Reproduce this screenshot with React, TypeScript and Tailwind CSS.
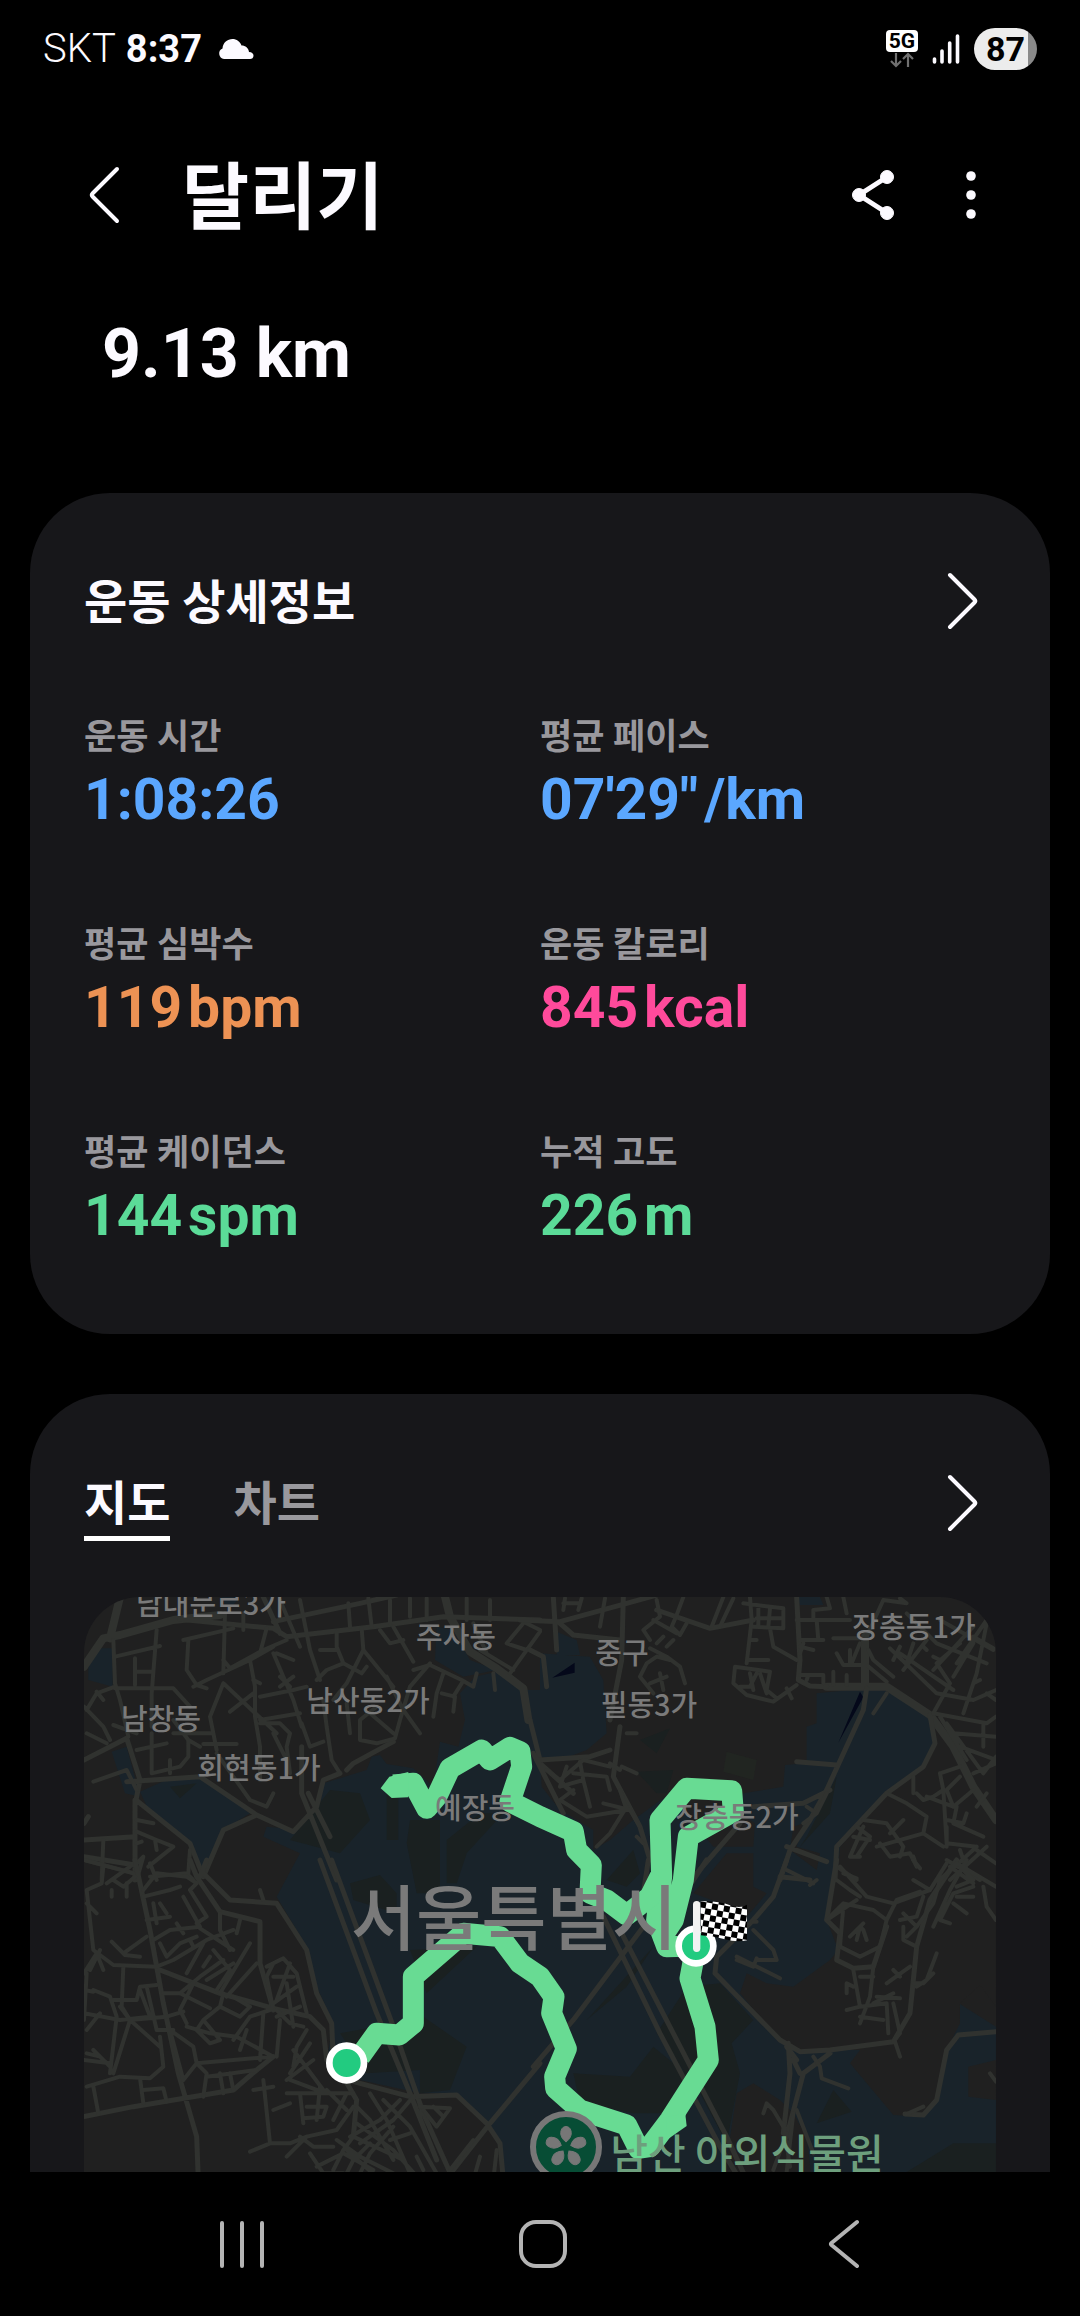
import { useState } from 'react';

const metrics = [
    { label: '운동 시간', value: '1:08:26', unit: '', color: 'text-[#5ba7ff]' },
    { label: '평균 페이스', value: `07'29"`, unit: '/km', color: 'text-[#5ba7ff]' },
    { label: '평균 심박수', value: '119', unit: 'bpm', color: 'text-[#ed9254]' },
    { label: '운동 칼로리', value: '845', unit: 'kcal', color: 'text-[#ff4a9b]' },
    { label: '평균 케이던스', value: '144', unit: 'spm', color: 'text-[#5bdb98]' },
    { label: '누적 고도', value: '226', unit: 'm', color: 'text-[#5bdb98]' },
];

const places = [
    { name: '남대문로3가', x: 127, y: 18 },
    { name: '주자동', x: 372, y: 51 },
    { name: '남산동2가', x: 284, y: 115 },
    { name: '남창동', x: 77, y: 133 },
    { name: '회현동1가', x: 175, y: 182 },
    { name: '예장동', x: 391, y: 222 },
    { name: '장충동1가', x: 830, y: 41 },
    { name: '중구', x: 538, y: 67 },
    { name: '필동3가', x: 565, y: 119 },
    { name: '장충동2가', x: 653, y: 231 },
];

function Chevron({ left = false }: { left?: boolean }) {
    return (
        <svg viewBox="0 0 32 60" className="h-15 w-8" fill="none" stroke="currentColor" strokeWidth="4" strokeLinecap="round" strokeLinejoin="round">
            {left ? <path d="M28 4 3.500 28.500Q2 30 3.500 31.500L28 56" /> : <path d="M4 4 28.500 28.500Q30 30 28.500 31.500L4 56" />}
        </svg>
    );
}

function StatusBar() {
    return (
        <header className="flex h-24 items-center justify-between pl-[43px] pr-[43px] pt-0.5">
            <div className="flex items-center text-[38px] leading-none">
                <span className="text-[40px] font-light">SKT</span>
                <span className="ml-2.5 font-bold">8:37</span>
                <svg viewBox="0 0 36 22" className="ml-4 h-[22px] w-9" fill="currentColor">
                    <path d="M6 21a5.500 5.500 0 0 1-1.500-10.500C5 4.500 9.500 1 14.500 1c4 0 7.500 2.500 9 6.500 4 0 7 2.500 7.500 6.500 3 .2 4.500 1.600 4.500 3.700 0 2-1.500 3.300-3.500 3.300z" />
                </svg>
            </div>
            <div className="flex items-center gap-3.5">
                <div className="flex w-8 flex-col items-center">
                    <span className="flex h-[22px] w-8 items-center justify-center rounded bg-white text-[21px] font-bold leading-none text-black">5G</span>
                    <svg viewBox="0 0 24 16" className="h-4 w-6" fill="none" stroke="#707070" strokeWidth="2.200">
                        <path d="M6 1v13M1 9l5 5 5-5M18 15V2M13 7l5-5 5 5" />
                    </svg>
                </div>
                <svg viewBox="0 0 28 30" className="h-[30px] w-7" stroke="currentColor" strokeWidth="3.600" strokeLinecap="round">
                    <path d="M2.500 25v3M10 17v11M17.700 9v19M25.500 2v26" />
                </svg>
                <div className="flex h-[42px] w-[63px] items-center justify-center rounded-full bg-linear-to-r from-[#ececec] from-86% to-[#8a8a8a] to-86% text-[34px] font-bold leading-none text-black">
                    87
                </div>
            </div>
        </header>
    );
}

/* Street geometry is drawn at three units per pixel, in four tiles. */
function RouteMap() {
    return (
        <svg viewBox="0 0 912 760" className="block w-full" role="img" aria-label="달리기 경로 지도">
            <defs>
                <pattern id="checker" width="36" height="36" patternUnits="userSpaceOnUse" patternTransform="translate(1922 1024) rotate(10)">
                    <rect width="36" height="36" fill="#fff" />
                    <path d="M0 0h18v18H0zM18 18h18v18H18z" fill="#000" />
                </pattern>
            </defs>
            <rect width="912" height="760" fill="#202020" />
            <g transform="translate(-24 -37) scale(.33333)">
                {/* parks */}
                <g fill="#19232a">
                    <path d="M1245 350 1310 335 1380 390 1440 390V280L1590 290 1630 360 1640 520 1580 570 1500 600 1440 590 1445 680 1500 750 1600 810 1600 870 1650 840 1720 780 1830 700 1960 860 2080 860 2085 790 2040 760 2050 700 2170 680 2175 615 2240 610V500L2270 490V400L2430 385 2480 390 2610 470 2630 550 2590 620 2480 700 2340 860 2330 960 2300 1080 2808 1400V2400H1330V1880L1330 1840 1310 1740 1280 1690 1190 1600 1080 1600 900 1560 820 1530 800 1500 820 1390 770 1280 740 1160 650 1010 720 880 610 830 620 800 720 810 780 740 790 670 920 630 935 590 960 585 980 612 1060 625 1120 680 1140 545 1195 560 1215 480 1200 400Z" />
                    <path d="M120 265H158V380L85 360V320ZM155 575 200 560 240 710 195 700ZM240 695 330 655H430L570 760 490 810 430 940 400 860 270 760ZM1130 200 1180 210 1230 300 1310 330 1210 350 1125 300ZM2210 111H2280L2290 135H2220ZM1490 215 1550 240 1560 285H1490ZM485 111H540L520 135 490 130Z" />
                </g>
                <g fill="#202020">
                    <path d="M1900 1000 2000 880 2080 880V980L2120 1000 2060 1070 1980 1030Z" />
                    <path d="M2300 1080 2340 900H2808V1340L2760 1275 2700 1330V1390L2680 1430 2655 1480 2640 1600 2590 1670 2500 1665 2370 1510 2400 1470H2200L2140 1420 2040 1300 2060 1240 2120 1270 2200 1280 2310 1200 2335 1170Z" />
                    <path d="M2030 1600 2080 1570 2160 1620 2200 1660 2240 1730 2260 1900H2000V1800ZM2725 1520 2808 1500V1620L2725 1610ZM2200 800 2230 790 2210 860 2280 880 2270 930 2190 870Z" />
                </g>
                <g fill="#1a2020">
                    <path d="M810 690 900 700 930 780 840 880 690 840ZM980 700H1015V840H980ZM1050 780H1140V1000H1070L1040 850ZM1160 840 1260 760 1330 760 1220 880 1190 970H1160ZM870 970 960 945 1010 1000 1010 1060 880 1020ZM1090 1370 1220 1460 1170 1590 1080 1600V1530L920 1540 840 1420 1060 1380ZM1050 1170 1250 1160 1100 1300Z" />
                    <path d="M1790 1420 1880 1280 1980 1270 2080 1380 2015 1450 2040 1540 2000 1750 1920 1600ZM1540 1540 1710 1550 1780 1460 1890 1550 1810 1660 1720 1660 1560 1630ZM2540 1836 2680 1750H2808V1836ZM2270 1690 2320 1590 2375 1655ZM1740 540 1830 505 1790 580ZM1730 635 1840 630 1820 700 1790 700ZM2240 830 2330 650 2310 760 2220 860ZM1580 1380 1780 1160 1700 1280ZM330 680 410 670 360 715ZM1640 960 1720 870 1740 940 1700 980Z" />
                </g>
                <path d="M1477 353 1544 308V338ZM2400 395 2410 412 2335 548Z" fill="#04081a" />
                <path d="M2000 575 2090 600 2080 660 1990 635Z" fill="#212521" />

                {/* streets */}
                <g fill="none" stroke="#30322f" strokeLinejoin="round" strokeLinecap="round">
                    {/* north west */}
                    <path strokeWidth="24" d="M72 320 130 235 180 225 340 180 480 165M150 235 180 111M1150 90 1170 170 1230 275 1310 325 1390 385 1405 480" />
                    <path strokeWidth="15" d="M360 178 640 205 680 230 940 200 1150 170 1440 180M640 185 900 130 1010 105M610 111 660 220M72 600 200 535 240 660 228 720 390 850 430 950 490 810 590 765 700 815 770 740 790 660 840 640M200 665 420 650 590 765M72 840 225 830M225 720V960M72 890 225 915M72 790 85 770M725 560V700L830 960M745 700 810 830M1440 600 1410 480M860 630 880 610 1000 545" />
                    <path strokeWidth="12" d="M160 240 165 370 180 420 205 530M165 290 300 258M225 295V375M290 210 275 400 275 500M165 385H340L390 440M225 335H275M370 240 520 205M385 240 380 330 410 375 440 385M495 160 490 340M490 300 510 325 610 270 680 240M400 380 440 360 570 300 640 260M570 300 585 380 585 470 600 560 600 660M490 370 450 470 470 570M490 370 650 520M580 400 510 455M600 410 700 390 740 380M640 280 700 420 725 500M700 300 650 280M720 120 750 270 780 360M660 120 720 260M770 360 800 330 850 310 830 260V215M780 270H830M850 310 905 340 920 320M905 205 910 270 860 370 820 420M910 270 1000 380M960 210 990 250 1030 240M1000 200 1060 305M865 130 870 200M925 115 935 200M990 120V190M1050 115V170M1100 115V180M1220 115V180M1290 120V180M1390 190 1340 250 1400 270M1390 185 1440 210M1440 215 1350 340M1240 190 1280 280M1260 270 1360 330M1060 330 1110 315 1205 360 1240 380 1250 340M1110 310 1050 380 1020 480 1005 535 950 550 900 540 900 480 950 440M1150 340 1130 400 1120 470M1145 400 1185 410 1180 455M1205 370 1180 410M1300 340 1305 390M980 350 1030 450 1080 520M600 480 720 460M640 520 680 600M600 490 660 490 690 520 680 560 690 640M725 490 750 560 790 545M790 420 800 500 815 600 840 640M860 430 870 520M460 520 340 520M160 495 230 520M275 520V640L360 620 385 590V540L420 560M330 600V640M430 552H530M470 580 570 720 620 740 640 700M385 540 340 480M72 440 130 500 150 540M80 450 110 400 165 380M80 520 140 550M110 395 130 420M100 665 200 630 230 690M230 570 320 550M72 900 225 940M130 840 125 960M230 780 280 790M230 815 290 840 340 860 265 920M285 840 290 870M230 850 245 845M230 910 250 890 230 960M270 950 380 940 400 960M390 870 385 940M930 460 1000 520M550 160V210M620 205 600 280M660 380 700 350M580 360 600 370M660 350 690 380" />
                    {/* north east */}
                    <g transform="translate(1440 0)">
                        <path strokeWidth="24" d="M860 380 1040 380 1170 465 1240 560 1300 680 1368 780M975 230V380" />
                        <path strokeWidth="15" d="M-60 180 60 185 260 130 350 105M40 111 50 270M60 190 100 225 240 240M350 150 510 205 640 180M770 111 780 300 775 360 810 378 860 380M980 385 970 450 860 690 810 780 750 870 720 960M1170 465 1185 550 1150 620 1040 700 890 860 885 960M-20 580 70 760M0 610 100 700M0 600 150 590 210 570M210 480 245 300 250 111M240 500 220 650 300 800 330 900M640 740 790 730 870 690M470 940 600 790M-30 270 10 290 20 380M720 950 810 960M740 860 860 905M770 605 890 615" />
                        <path strokeWidth="12" d="M180 200 195 115M75 115 70 150M125 115 115 150M70 130H115M350 120 360 170 310 210 330 240M430 111 410 165 395 200 420 225 440 190M340 180 410 220M515 200 550 111M580 115 540 200M610 130 730 145V205L640 200M630 111 635 180 620 310M655 145V200M690 145 685 200M650 175H730M690 205 700 260 770 300M625 300H685M630 240H650M585 320 690 335 680 390 710 415M585 320 580 370 620 405 700 425 770 375M600 380H630L650 340M630 340 640 390M660 340 680 400M740 385 755 415M780 240H850M790 250 780 280M780 260 820 270M770 180H930M820 180V150L870 145 860 111M830 180 835 240M780 345H850V370M805 345 800 360M880 335V375M920 345V375M880 235H970M890 280 910 315H980L1040 365M930 270V310M960 250 935 310M910 111 920 160M1030 120 980 230M1030 120 1100 130 1080 115M1100 160 1190 250 1340 310M1050 265 1190 400 1300 420 1368 390M1080 260 1060 300M1080 280 1240 390M1120 250 1100 310M1090 330 1160 240M1180 330 1300 200M1190 310 1260 250M1250 310 1340 180M1300 230 1360 265M1340 190 1310 340 1270 460M1200 180 1360 270M1300 250 1240 350M1180 460 1230 370 1190 310M1180 460 1340 490 1368 470M1340 400 1368 420M1240 520 1368 530M1330 490V560M1220 490 1330 640 1368 590M1260 560 1368 600M1300 640 1368 610M1300 370 1320 360M1200 300 1180 290M1160 270 1150 260M1040 400 1000 460M1200 470 1280 600M1120 650V700M1040 700 1100 730 1160 770 1150 820 1210 860M1200 640 1210 690 1180 710 1150 720 1130 700M1200 640 1260 620M1210 690 1220 850 1310 860M1220 780 1270 790 1280 760M1160 710 1240 740 1220 690 1260 650M1250 740 1240 790 1330 830M1300 690 1240 740M1340 700 1310 740M1010 860 1150 820M1020 850 1050 890 1110 880 1130 920M970 780 1040 790 1090 860 1080 890M950 800 990 830 950 890M970 800 930 890 960 890M940 830 990 840M1050 820 1090 780M1310 860 1200 960M1340 860 1230 960M1260 870 1290 960M1310 870 1368 910M1220 900 1320 960M890 920 950 960M1120 890 1130 920M240 630 210 610M20 630 60 660 130 600 210 620M60 680 80 620M60 680 130 660 150 740M100 640 200 650 210 690M100 690 60 720 140 770 260 750 240 690M300 800 270 750 190 730M260 740 210 820 170 860M120 605 130 660M260 520 290 520M245 620 290 640M290 830 310 850M330 265 380 290 420 320 435 370M350 250 370 230M350 290 390 300M380 260 400 240M300 350 320 310 350 290M300 350 340 400M330 370 380 350M360 340 370 390M1060 350 1000 300 985 270M800 740 830 760 860 700M790 790 830 760M1220 800 1220 860" />
                    </g>
                    {/* south west */}
                    <g transform="translate(0 900)">
                        <path strokeWidth="15" d="M225 0 270 210 310 430 355 640 410 830 415 960M72 770 220 740 520 690 590 630 640 590M390 0 410 50 480 155 600 185 600 310 640 450M430 40 510 120 650 130 740 270 770 400 815 490 820 600 890 720 880 830M440 0 420 50M830 650 900 670 1050 710 1190 705 1280 790 1320 850 1330 960M780 0 950 460 1050 700 1130 900M815 0 1000 500 1090 760 1180 960M1440 610 1290 790 1180 930M300 330 480 400 640 445M640 445 750 470 790 510 800 600" />
                        <path strokeWidth="12" d="M72 0 220 40M130 20 125 70 80 90 100 270 160 315 290 320 340 300 440 240 520 210M120 270 90 330M190 320 185 440 210 480 300 560M190 280 260 230M155 245 195 285 240 290M72 340 110 280 130 330M80 340 72 480M100 390 150 410 170 470 150 640M72 390 100 395M120 460 80 510M72 460 180 480M160 420 230 420 240 380 290 375M180 440 210 480 160 640M240 390 270 470 180 480M210 480 320 470 370 455M260 380 290 510 340 510M310 400 360 400 450 445M360 400 420 350 490 300M400 370 360 450 380 490M330 510 370 660M300 530 310 620 270 655 180 650 80 680M72 600 150 610M100 570 150 620M120 590 80 580M100 680 115 760M240 655 250 730M250 690 310 685 320 725M370 660 410 610 400 560 330 510M410 610 520 600 640 590M410 610 440 640 430 710M480 640 490 700M510 640 520 690M440 650 590 630M380 500 450 520 530 530 640 590M490 400 480 440 430 480M430 480 410 510 450 550 480 540 430 480M480 440 540 470 570 440 520 410M520 540 570 470 630 450M540 570 560 510M570 250 480 400M590 310 500 410M520 310 440 360M460 270 510 330 470 390M640 310 620 350 640 450M620 320 670 295 710 340 740 460M640 350 700 350M690 310 650 420M710 380 640 430M650 450 690 490 730 500M680 370 700 500M720 440 650 470M660 480 650 590M610 460 600 600M740 510 710 560 700 620M750 550 690 640M760 600 680 660M700 570 790 690M680 700 880 700M690 660 770 690M610 660 630 850 570 875M640 750 690 730M630 850 690 850 740 830 830 810 880 740M680 890 740 830M720 830 760 860 820 860M720 700 730 790M780 680 770 780M800 690 860 750M740 740H800L790 770 730 775M820 780 860 700M890 740 930 780 1000 900M880 830 850 870 820 930M830 840 900 890 1000 940M880 830 1030 900M890 790 1000 870 1080 960M930 700 980 780 1050 940M970 720 1050 800 1130 940M1020 720 960 780 870 830M1060 710 1000 780 900 850M930 850 880 900 850 960M1000 800 930 880 900 940M750 880 790 940 850 940M770 920 850 880 940 930M860 870 960 960M990 840 1050 820M1080 740 1170 745 1130 800 1090 750M1120 740 1150 770M1240 840 1170 930M1260 890 1240 960M1310 870 1300 960M1070 890 1090 930M250 110 330 90 360 80M250 90 290 40 380 50 410 70M260 180 330 170M280 130 290 190M300 130 320 160M280 240 330 210 420 200 370 110M300 250 320 290 360 250 410 230M390 90 440 170 410 190M390 90 410 70M480 160V210M540 180 530 220M480 210 510 270M420 205 520 270M350 190 370 220M160 60 190 80 225 50M140 70 210 20M155 90V110M200 70V110M80 130 110 160M600 90 610 120M290 60 270 10M430 250 380 340M390 240 400 260M450 290 430 320M580 690 640 680" />
                    </g>
                    {/* south east */}
                    <g transform="translate(1440 900)">
                        <path strokeWidth="15" d="M740 0 700 110 640 180 530 290 525 340 720 540 780 575 870 570 1060 545 1110 460 1130 260 1170 120 1250 0M890 0 860 180 900 220 890 300 940 325 1000 320 1040 200M190 170 360 520 540 860 600 960M240 210 400 520 560 830 620 960M310 200 100 480-20 620M325 0 310 100M500 0 440 90M745 550 750 640 730 820M870 580 790 640 740 830M1368 515 1255 525 1220 570 1190 720 1150 765 1095 762M770 600 740 560M760 600 780 640" />
                        <path strokeWidth="12" d="M900 20 980 110 1060 130 1170 90M890 60 930 90 960 110M910 40 950 55M860 180 910 130 1000 150 1040 180 1020 260 960 290 900 260 910 140M860 180 950 120M1040 180 1070 120 1140 95M1090 160 1130 200 1100 230M1080 180 1130 170 1150 110M1090 200 1090 240 1130 260M1130 200 1180 130 1200 60 1250 10 1368 80M1220 10 1170 90 1120 60M1280 0 1230 90 1180 200M1250 80 1300 60 1270 30M1300 80 1240 100 1200 180 1230 190M1250 110 1300 110M1240 130 1280 160M1330 80 1340 140 1368 180M1230 20 1300 70M930 230 970 190M950 240 960 200 970 210 980 240M940 330 960 440 920 450M1000 320 990 410 960 490M940 380 920 370 920 400M960 440 1040 430 1045 520M960 470 1030 480M1010 410 1080 415M1060 430 1080 520 1060 545M1000 350 960 350M1040 370 1110 320M1060 330 1080 350M1130 380 1160 360 1190 280M1120 370 1150 370 1180 340M1000 430 1060 400M640 210 700 270 710 300 650 300M590 290 720 355M590 300 640 320 650 295M740 30 820 70M830 60 810 75M1065 545 1080 590M820 590 840 620 845 655 925 685M670 760 680 730 700 750 730 800M730 790 750 920M770 750 820 880M740 820 700 930M760 760 740 936M1100 762 1150 740M1350 640 1368 665M1120 0 1140 25M640 185H650" />
                    </g>
                </g>

                {/* recorded route */}
                <path d="M900 1490 950 1420 1018 1425 1060 1390V1250L1210 1120 1320 1130 1380 1210 1440 1250 1482 1310 1475 1360 1519 1466 1484 1550 1487 1585 1560 1650 1700 1695 1735 1765 1770 1760 1830 1680 1945 1500 1935 1400 1890 1255 1908 1158 1820 1160 1790 1080 1805 950 1800 780 1880 685 2015 692 2020 755 1885 830 1870 960 1840 1080 1800 1140" fill="none" stroke="#68db93" strokeWidth="63" strokeLinejoin="round" />
                <path d="M1800 950 1770 1010 1700 1065 1640 1020 1590 1000 1594 915 1550 870 1540 815 1440 770 1350 725 1385 620 1380 575 1350 562 1290 600 1265 570 1170 625 1130 710 1100 745 1060 670 1000 675" fill="none" stroke="#68db93" strokeWidth="63" strokeLinejoin="round" />
                <path d="M962 685 988 650 1045 636V712L995 714Z" fill="#68db93" />
                <path d="M1820 1670 1876 1662 1880 1698 1820 1740Z" fill="#68db93" />
                <circle cx="860" cy="1509" r="52" fill="#22cb80" stroke="#fff" strokeWidth="20" />
                <circle cx="1908" cy="1158" r="52" fill="#22cb80" stroke="#fff" strokeWidth="20" />
                <path d="M1922 1024Q1975 1022 2008 1035T2061 1034V1141Q2030 1148 1995 1138T1922 1126Z" fill="url(#checker)" />
                <path d="M1910 1034V1165" stroke="#f2f2f2" strokeWidth="22" strokeLinecap="round" />
            </g>

            {/* place names */}
            <g fill="#7a7a7a" textAnchor="middle" className="font-['Noto_Sans_CJK_KR',sans-serif] text-[29px] font-medium">
                {places.map((place) => (
                    <text key={place.name} x={place.x} y={place.y}>{place.name}</text>
                ))}
                <text x="430" y="347" className="text-[71px]">서울특별시</text>
                <text x="663" y="572" fill="#6d9f7d" className="text-[41px]">남산 야외식물원</text>
            </g>

            {/* botanical garden pin */}
            <g transform="translate(482 550)">
                <circle r="33" fill="#074d35" stroke="#777777" strokeWidth="6" />
                {[0, 72, 144, 216, 288].map((angle) => (
                    <path key={angle} d="M0-5C-4-8-6-12-5-16-4-22 4-22 5-16 6-12 4-8 0-5Z" fill="#777777" stroke="#777777" strokeWidth="1" transform={`rotate(${angle})`} />
                ))}
            </g>
        </svg>
    );
}

export default function App() {
    const [tab, setTab] = useState('map');

    return (
        <div className="flex h-screen flex-col bg-black font-['Roboto','Noto_Sans_CJK_KR',sans-serif] text-[#fcfaff]">
            <StatusBar />
            <div className="flex h-[196px] shrink-0 items-center pl-[89px] pr-[104px] pt-0.5">
                <button aria-label="뒤로"><Chevron left /></button>
                <h1 className="ml-[61px] flex-1 pt-1.5 text-[73px] font-bold leading-none">달리기</h1>
                <button aria-label="공유" className="mr-[71px]">
                    <svg viewBox="0 0 44 50" className="h-[50px] w-11" fill="currentColor" stroke="currentColor">
                        <path d="M36 7 8 25 36 43" fill="none" strokeWidth="5" />
                        <circle cx="36" cy="7" r="6.500" />
                        <circle cx="8" cy="25" r="6.500" />
                        <circle cx="36" cy="43" r="6.500" />
                    </svg>
                </button>
                <button aria-label="더보기">
                    <svg viewBox="0 0 10 50" className="h-[50px] w-[10px]" fill="currentColor">
                        <circle cx="5" cy="6" r="4.800" />
                        <circle cx="5" cy="25" r="4.800" />
                        <circle cx="5" cy="44" r="4.800" />
                    </svg>
                </button>
            </div>

            <main className="min-h-0 flex-1 overflow-y-auto px-[30px] [scrollbar-width:none]">
                <p className="h-[201px] pl-[72px] pt-[22px] text-[68px] font-bold leading-[80px]">9.13 km</p>

                <section className="rounded-[80px] bg-[#17171a] px-[54px] pb-[82px] pt-[70px]">
                    <div className="flex items-center justify-between pr-[18px]">
                        <h2 className="pt-1 text-[47px] font-bold leading-[72px]">운동 상세정보</h2>
                        <button aria-label="운동 상세정보 보기"><Chevron /></button>
                    </div>
                    <dl className="mt-[73px] grid grid-cols-[456px_1fr] gap-y-[84px]">
                        {metrics.map((metric) => (
                            <div key={metric.label}>
                                <dt className="text-[35px] font-bold leading-[52px] text-[#99989d]">{metric.label}</dt>
                                <dd className={`flex items-baseline gap-1.5 text-[57px] font-bold leading-[72px] ${metric.color}`}>
                                    <span>{metric.value}</span>
                                    {metric.unit && <span>{metric.unit}</span>}
                                </dd>
                            </div>
                        ))}
                    </dl>
                </section>

                <section className="mt-[60px] rounded-[80px] bg-[#17171a] px-[54px] pb-20 pt-[70px]">
                    <div className="flex items-center justify-between pr-[18px]">
                        <div role="tablist" className="flex gap-[63px] pt-1 text-[47px] font-bold leading-[64px]">
                            <button
                                role="tab"
                                aria-selected={tab === 'map'}
                                onClick={() => setTab('map')}
                                className={tab === 'map' ? 'border-b-[5px] border-white pt-1' : 'border-b-[5px] border-transparent pt-1 text-[#99989d]'}
                            >
                                지도
                            </button>
                            <button
                                role="tab"
                                aria-selected={tab === 'chart'}
                                onClick={() => setTab('chart')}
                                className={tab === 'chart' ? 'border-b-[5px] border-white pt-1' : 'border-b-[5px] border-transparent pt-1 text-[#99989d]'}
                            >
                                차트
                            </button>
                        </div>
                        <button aria-label="지도 보기"><Chevron /></button>
                    </div>
                    <div className="mt-14 overflow-hidden rounded-[56px]">
                        <RouteMap />
                    </div>
                </section>
            </main>

            <nav className="grid h-36 shrink-0 grid-cols-3 items-center pl-[92px] pr-[86px] text-[#b4b4b4]">
                <button aria-label="최근 앱" className="justify-self-center">
                    <svg viewBox="0 0 44 48" className="h-12 w-11" stroke="currentColor" strokeWidth="4" strokeLinecap="round">
                        <path d="M2 3v43M22 3v43M42 3v43" />
                    </svg>
                </button>
                <button aria-label="홈" className="justify-self-center">
                    <svg viewBox="0 0 48 48" className="h-12 w-12" fill="none" stroke="currentColor" strokeWidth="4">
                        <rect x="2" y="2" width="44" height="44" rx="15" />
                    </svg>
                </button>
                <button aria-label="이전" className="justify-self-center">
                    <svg viewBox="0 0 32 50" className="h-[50px] w-8" fill="none" stroke="currentColor" strokeWidth="4" strokeLinecap="round" strokeLinejoin="round">
                        <path d="M29 3 3.500 24Q2.500 25 3.500 26L29 47" />
                    </svg>
                </button>
            </nav>
        </div>
    );
}
